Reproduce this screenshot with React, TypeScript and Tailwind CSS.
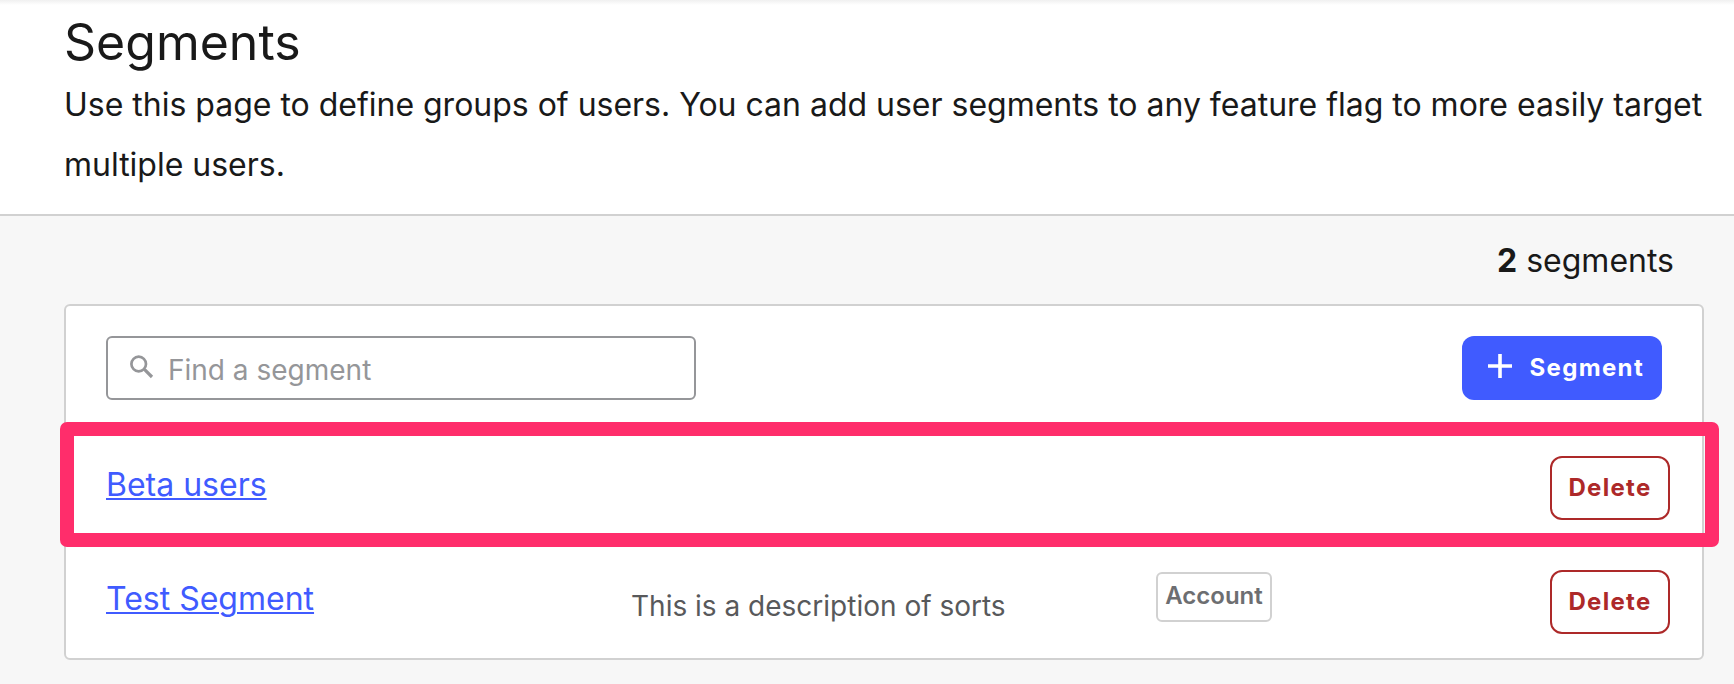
type Segment = { name: string; description?: string; kind?: string };

const segments: Segment[] = [
  { name: "Beta users" },
  { name: "Test Segment", description: "This is a description of sorts", kind: "Account" },
];

function SearchIcon() {
  return (
    <svg width="24" height="24" viewBox="0 0 24 24" fill="none" stroke="#959699" strokeWidth="2.7">
      <circle cx="8.7" cy="9" r="7.3" />
      <path d="M14.4 14.4 22 22" strokeWidth="3.2" />
    </svg>
  );
}

function PlusIcon() {
  return (
    <svg width="24" height="24" viewBox="0 0 24 24" fill="#fff">
      <path d="M10.2 0h3.6v10.2H24v3.6H13.8V24h-3.6V13.8H0v-3.6h10.2z" />
    </svg>
  );
}

function SegmentRow({ segment }: { segment: Segment }) {
  return (
    <div className="grid h-[114px] grid-cols-[525px_525px_1fr_auto] items-center pl-10 pr-8">
      <a
        href="#"
        className="-mt-[6px] justify-self-start text-[32px] leading-[40px] text-[#405bff] underline decoration-2 underline-offset-[2px]"
      >
        {segment.name}
      </a>
      <p className="mt-[8px] text-[28px] leading-[40px] text-[#58595b]">{segment.description}</p>
      <div className="-mt-[10px]">
        {segment.kind && (
          <span className="flex h-[50px] w-[116px] items-center justify-center rounded-[6px] border-2 border-[#d1d1d1] pb-[2px] text-[24px] font-semibold text-[#6d6e71]">
            {segment.kind}
          </span>
        )}
      </div>
      <button className="flex h-16 w-[120px] items-center justify-center rounded-[12px] border-2 border-[#ad2929] text-[24px] font-bold tracking-[1.3px] text-[#ad2929]">
        Delete
      </button>
    </div>
  );
}

export default function App() {
  return (
    <div className="h-[684px] overflow-hidden bg-[#f7f7f7] font-['Inter',sans-serif] text-[#191919]">
      <header className="h-[216px] border-b-2 border-[#d1d1d1] bg-white bg-[linear-gradient(#f0f0f0,#fff_5px)] pl-16 pt-[13px]">
        <h1 className="text-[50px] leading-[58px]">Segments</h1>
        <p className="mt-[4px] w-[1660px] text-[32px] leading-[60px] tracking-[-0.012px]">
          Use this page to define groups of users. You can add user segments to any feature flag to more easily target
          multiple users.
        </p>
      </header>
      <main className="pl-16 pr-[30px]">
        <p className="flex h-[88px] items-center justify-end whitespace-pre pr-[30px] pt-[2px] text-[32px]">
          <b className="font-bold">2</b> segments
        </p>
        <section className="relative h-[356px] rounded-[6px] border-2 border-[#d1d1d1] bg-white">
          <div className="flex h-[125px] items-start justify-between pl-10 pr-10 pt-[30px]">
            <label className="flex h-16 w-[590px] items-center rounded-[6px] border-2 border-[#959699] pl-[22px]">
              <span className="-mt-[3px]"><SearchIcon /></span>
              <input
                placeholder="Find a segment"
                className="ml-[14px] mt-[4px] w-[480px] bg-transparent text-[28px] outline-none placeholder:text-[#959699]"
              />
            </label>
            <button className="flex h-16 w-[200px] items-center rounded-[12px] bg-[#405bff] pl-[26px] text-[24px] font-bold tracking-[1.35px] text-white">
              <span className="-mt-[4px] mr-[17.5px]"><PlusIcon /></span>
              Segment
            </button>
          </div>
          {segments.map((segment) => (
            <SegmentRow key={segment.name} segment={segment} />
          ))}
          <div className="pointer-events-none absolute -left-[6px] top-[116px] h-[125px] w-[1659px] rounded-[7px] border-[14px] border-[#ff2d6b]" />
        </section>
      </main>
    </div>
  );
}
